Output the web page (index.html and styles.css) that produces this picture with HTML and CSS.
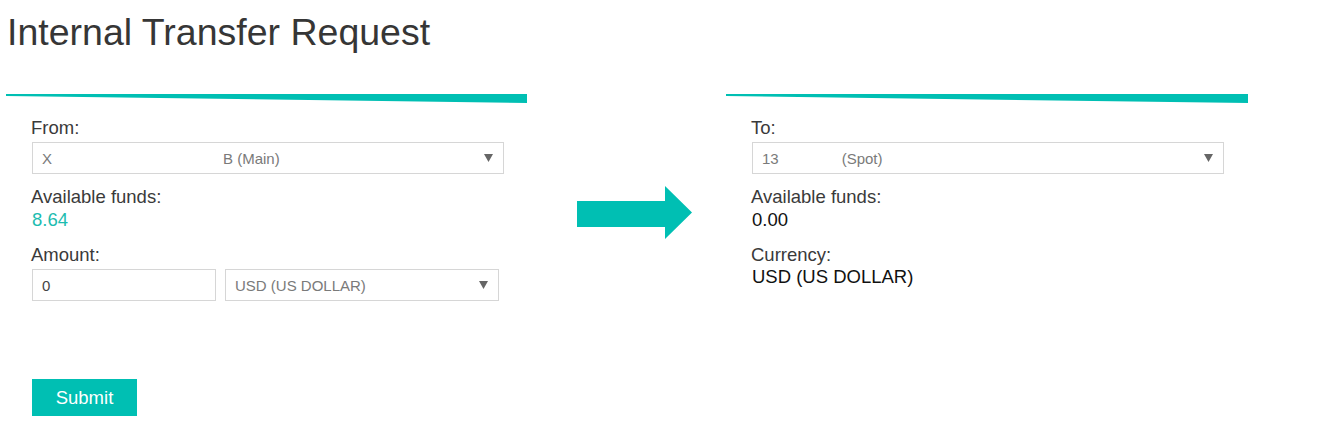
FILE: index.html
```html
<!DOCTYPE html>
<html lang="en">
<head>
<meta charset="utf-8">
<title>Internal Transfer Request</title>
<link rel="stylesheet" href="styles.css">
</head>
<body>
<div class="page">
  <h1 class="title">Internal Transfer Request</h1>
  <div class="transfer">
    <section class="panel">
      <svg class="divider" viewBox="0 0 521 10" preserveAspectRatio="none" width="521" height="10"><polygon points="0,0 521,0 521,9 0,2" fill="#00bfb3"/></svg>
      <div class="panel-body">
        <div class="label">From:</div>
        <div class="select select-wide">
          <span class="select-text">X<span class="gap-a"></span>B (Main)</span>
          <svg class="caret" width="9" height="8" viewBox="0 0 9 8"><polygon points="0,0 9,0 4.5,8" fill="#666"/></svg>
        </div>
        <div class="label label-gap">Available funds:</div>
        <div class="value value-teal">8.64</div>
        <div class="label label-gap2">Amount:</div>
        <div class="amount-row">
          <div class="input">0</div>
          <div class="select select-currency">
            <span class="select-text">USD (US DOLLAR)</span>
            <svg class="caret" width="9" height="8" viewBox="0 0 9 8"><polygon points="0,0 9,0 4.5,8" fill="#666"/></svg>
          </div>
        </div>
        <button class="submit" type="button">Submit</button>
      </div>
    </section>
    <div class="arrow-col">
      <svg class="arrow" width="115" height="53" viewBox="0 0 115 53"><polygon points="0,15 88,15 88,0 115,26.5 88,53 88,41 0,41" fill="#00bfb3"/></svg>
    </div>
    <section class="panel panel-right">
      <svg class="divider" viewBox="0 0 522 10" preserveAspectRatio="none" width="522" height="10"><polygon points="0,0 522,0 522,9 0,2" fill="#00bfb3"/></svg>
      <div class="panel-body">
        <div class="label">To:</div>
        <div class="select select-wide">
          <span class="select-text">13<span class="gap-b"></span>(Spot)</span>
          <svg class="caret" width="9" height="8" viewBox="0 0 9 8"><polygon points="0,0 9,0 4.5,8" fill="#666"/></svg>
        </div>
        <div class="label label-gap">Available funds:</div>
        <div class="value">0.00</div>
        <div class="label label-gap2">Currency:</div>
        <div class="value value-tight">USD (US DOLLAR)</div>
      </div>
    </section>
  </div>
</div>
</body>
</html>
```

FILE: styles.css
```css
html, body {
  margin: 0;
  padding: 0;
  background: #fff;
}

body {
  font-family: "Liberation Sans", Arial, sans-serif;
  color: #333;
}

.page {
  padding-left: 6px;
  padding-top: 10px;
}

.title {
  margin: 0 0 40px 1px;
  font-size: 37.5px;
  line-height: 44px;
  font-weight: normal;
  color: #363636;
}

.transfer {
  display: flex;
  align-items: flex-start;
}

.panel {
  width: 521px;
  flex: none;
}

.panel-right {
  width: 522px;
}

.divider {
  display: block;
}

.panel-body {
  padding-left: 25px;
  padding-top: 14px;
  display: flex;
  flex-direction: column;
  align-items: flex-start;
}

.label {
  font-size: 18.5px;
  line-height: 20px;
  color: #3a3a3a;
  margin-bottom: 4px;
}

.label-gap {
  margin-top: 13px;
  margin-bottom: 3px;
}

.label-gap2 {
  margin-top: 15px;
}

.value {
  font-size: 18.5px;
  line-height: 20px;
  color: #111;
  padding-left: 1px;
}

.value-teal {
  color: #1cbcb0;
}

.value-tight {
  margin-top: -2px;
}

.select {
  box-sizing: border-box;
  height: 32px;
  border: 1px solid #d6d6d6;
  background: #fff;
  display: flex;
  align-items: center;
  justify-content: space-between;
  padding: 0 10px 0 9px;
  margin-left: 1px;
  font-size: 15px;
  color: #7a7a7a;
}

.select-wide {
  width: 472px;
}

.select-currency {
  width: 274px;
  margin-left: 9px;
}

.select-text {
  display: flex;
  align-items: center;
  white-space: nowrap;
}

.gap-a {
  display: inline-block;
  width: 171px;
}

.gap-b {
  display: inline-block;
  width: 63px;
}

.caret {
  display: block;
  flex: none;
}

.amount-row {
  display: flex;
}

.input {
  box-sizing: border-box;
  width: 184px;
  height: 32px;
  border: 1px solid #d6d6d6;
  margin-left: 1px;
  padding-left: 9px;
  display: flex;
  align-items: center;
  font-size: 15px;
  color: #444;
}

.submit {
  margin-top: 78px;
  margin-left: 1px;
  width: 105px;
  height: 37px;
  border: none;
  background: #00bfb3;
  color: #fff;
  font-family: "Liberation Sans", Arial, sans-serif;
  font-size: 18.5px;
  padding: 0;
  cursor: pointer;
}

.arrow-col {
  width: 199px;
  flex: none;
  padding-top: 92px;
  padding-left: 50px;
  box-sizing: border-box;
}

.arrow {
  display: block;
}
```
